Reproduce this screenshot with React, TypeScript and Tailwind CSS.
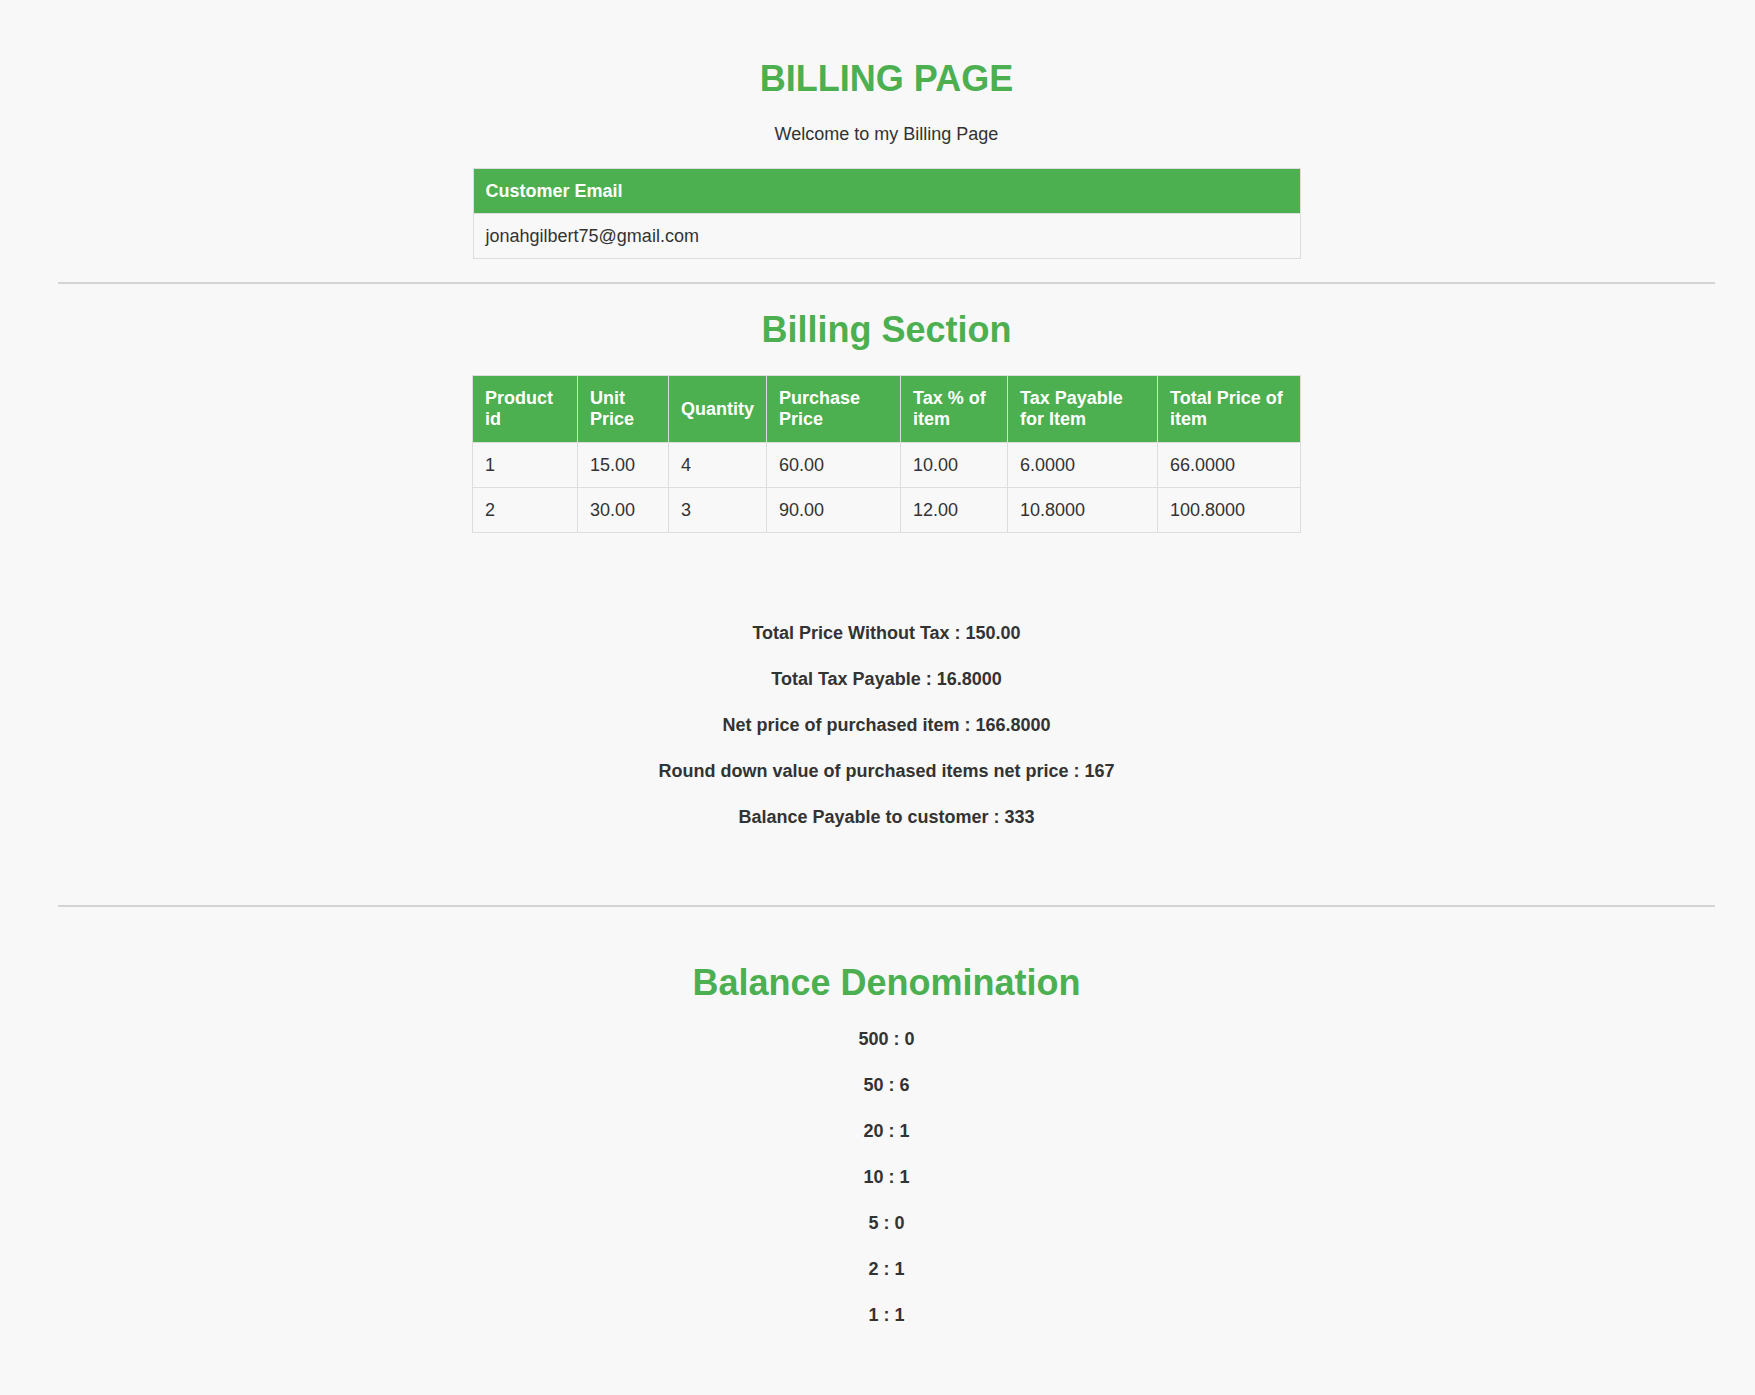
export default function App() {
  const rows = [
    ["1", "15.00", "4", "60.00", "10.00", "6.0000", "66.0000"],
    ["2", "30.00", "3", "90.00", "12.00", "10.8000", "100.8000"],
  ];
  const headers = [
    "Product id",
    "Unit Price",
    "Quantity",
    "Purchase Price",
    "Tax % of item",
    "Tax Payable for Item",
    "Total Price of item",
  ];
  const summary = [
    "Total Price Without Tax : 150.00",
    "Total Tax Payable : 16.8000",
    "Net price of purchased item : 166.8000",
    "Round down value of purchased items net price : 167",
    "Balance Payable to customer : 333",
  ];
  const denoms = ["500 : 0", "50 : 6", "20 : 1", "10 : 1", "5 : 0", "2 : 1", "1 : 1"];

  return (
    <div className="min-h-screen bg-[#f8f8f8] pl-[58px] pr-[40px] pt-[58px] pb-[40px] font-['Liberation_Sans',Arial,sans-serif] text-[#333]">
      <h1 className="text-center text-[36px] font-bold leading-[1.15] text-[#4caf50]">BILLING PAGE</h1>
      <p className="mt-[25px] text-center text-[18px] leading-[1.15]">Welcome to my Billing Page</p>
      <table className="mx-auto mt-[23px] w-[828px] border-collapse text-[18px] leading-[1.15]">
        <thead>
          <tr>
            <th className="h-[45px] border border-[#ddd] bg-[#4caf50] px-3 text-left font-bold text-white">Customer Email</th>
          </tr>
        </thead>
        <tbody>
          <tr>
            <td className="h-[45px] border border-[#ddd] px-3">jonahgilbert75@gmail.com</td>
          </tr>
        </tbody>
      </table>

      <hr className="mt-[23px] border-t-2 border-[#d4d4d4]" />

      <h2 className="mt-[25px] text-center text-[36px] font-bold leading-[1.15] text-[#4caf50]">Billing Section</h2>
      <table className="mx-auto mt-[25px] w-[828px] table-fixed border-collapse text-[18px] leading-[1.15]">
        <colgroup>
          <col className="w-[105px]" />
          <col className="w-[91px]" />
          <col className="w-[98px]" />
          <col className="w-[134px]" />
          <col className="w-[107px]" />
          <col className="w-[150px]" />
          <col className="w-[143px]" />
        </colgroup>
        <thead>
          <tr>
            {headers.map((h) => (
              <th
                key={h}
                className="h-[66px] border border-[#ddd] bg-[#4caf50] px-3 py-3 text-left align-middle font-bold text-white"
              >
                {h}
              </th>
            ))}
          </tr>
        </thead>
        <tbody>
          {rows.map((r, i) => (
            <tr key={i}>
              {r.map((c, j) => (
                <td key={j} className="h-[45px] border border-[#ddd] px-3">
                  {c}
                </td>
              ))}
            </tr>
          ))}
        </tbody>
      </table>

      <div className="mt-[77px] flex flex-col items-center">
        {summary.map((s) => (
          <div key={s} className="text-[18px] font-bold leading-[46px]">
            {s}
          </div>
        ))}
      </div>

      <hr className="mt-[65px] border-t-2 border-[#d4d4d4]" />

      <h2 className="mt-[55px] text-center text-[36px] font-bold leading-[1.15] text-[#4caf50]">Balance Denomination</h2>
      <div className="mt-[13px] flex flex-col items-center">
        {denoms.map((d) => (
          <div key={d} className="text-[18px] font-bold leading-[46px]">
            {d}
          </div>
        ))}
      </div>
    </div>
  );
}
